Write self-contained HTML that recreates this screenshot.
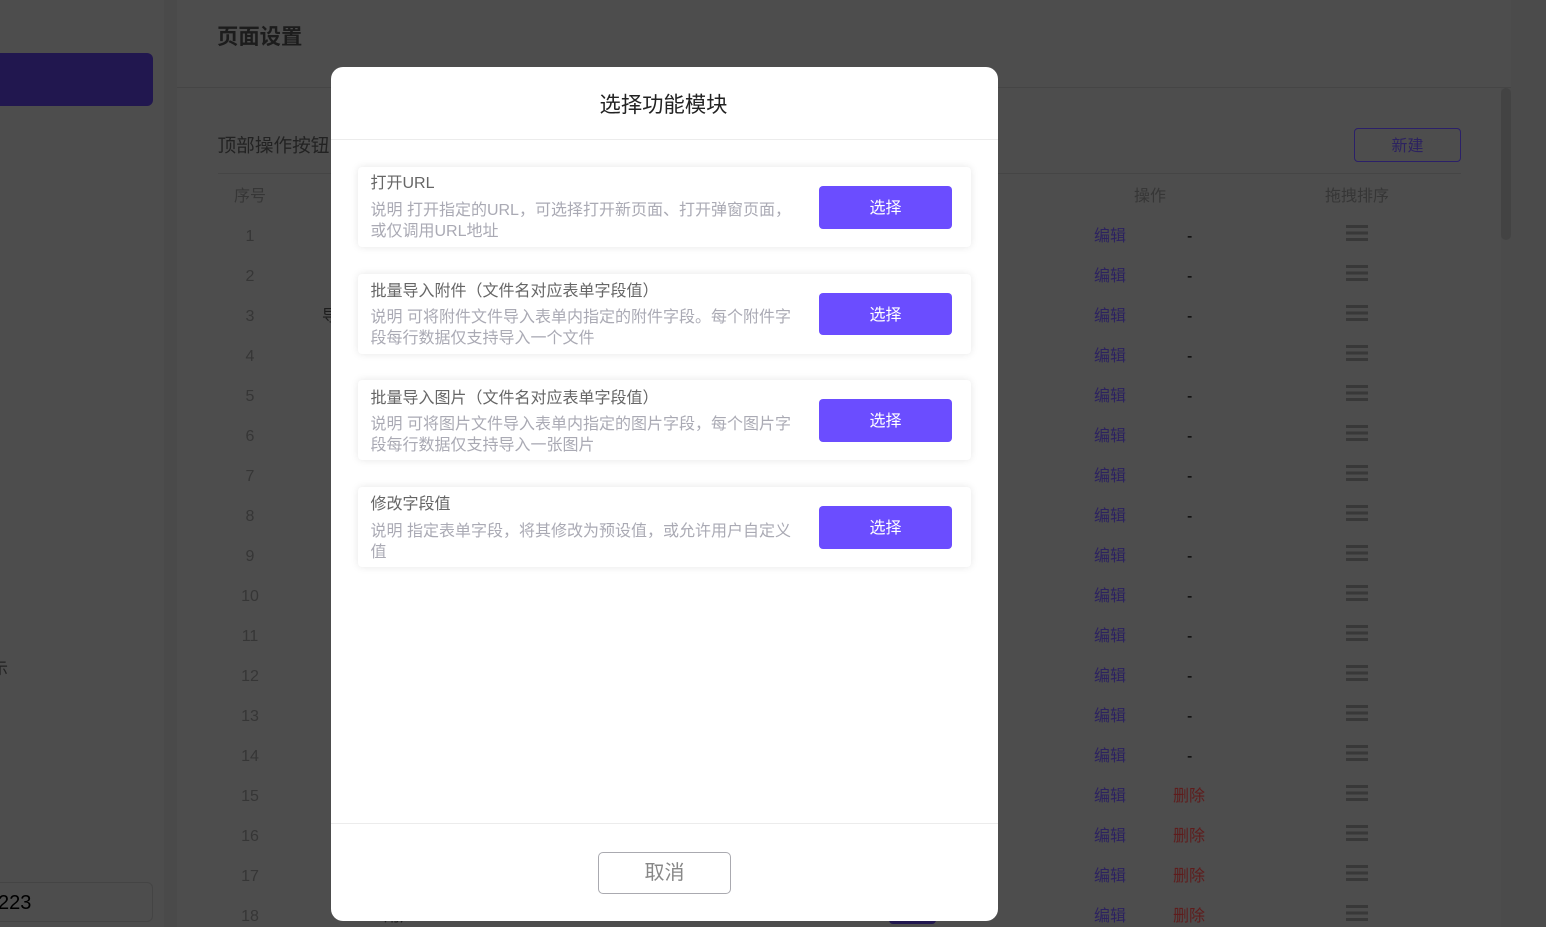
<!DOCTYPE html>
<html lang="zh-CN"><head><meta charset="utf-8"><title>选择功能模块</title>
<style>
*{box-sizing:border-box}
html,body{margin:0;padding:0;width:1546px;height:927px;overflow:hidden;background:#4d4d4d}
body{position:relative;font-family:"Liberation Sans","Noto Sans CJK SC",sans-serif}
.a{position:absolute;white-space:nowrap}
.r{position:absolute;left:0;width:1546px;height:40px}
.r span,.r i{position:absolute;top:2px;height:40px;line-height:40px;font-size:16px;font-style:normal;white-space:nowrap}
.n{left:210px;width:80px;text-align:center;color:#363636}
.e{left:1094px;color:#2c2260}
.d{left:1173px;color:#5f1c1c}
.m{left:1187px;color:#000;width:6px}
.r b{position:absolute;left:1346px;top:10px;width:22px;height:16px;background:linear-gradient(#383838 0 3px,transparent 3px 6.5px,#383838 6.5px 9.5px,transparent 9.5px 13px,#383838 13px 16px)}
#modal{position:absolute;left:331px;top:67px;width:667px;height:854px;background:#fff;border-radius:12px;overflow:hidden}
.card{position:absolute;left:27px;width:613px;height:80px;background:#fff;border-radius:4px;box-shadow:0 0 8px rgba(0,0,0,.1)}
.t{position:absolute;left:12.5px;font-size:16px;line-height:21px;color:#666;white-space:nowrap}
.l{position:absolute;left:12.5px;font-size:16px;line-height:21px;color:#aaaab4;white-space:nowrap}
.btn{position:absolute;left:461px;top:19px;width:133px;height:43px;background:#6b4dff;border-radius:4px;color:#fff;font-size:16px;line-height:45px;text-align:center}
</style></head><body>
<div class="a" style="left:164px;top:0;width:13px;height:927px;background:#4a4a4a"></div>
<div class="a" style="left:0;top:53px;width:153px;height:53px;background:#21174f;border-radius:0 6px 6px 0"></div>
<div class="a" style="left:-8px;top:659px;font-size:16px;line-height:22px;color:#222">示</div>
<div class="a" style="left:-10px;top:882px;width:163px;height:40px;border:1px solid #444;border-radius:6px"></div>
<div class="a" style="left:-2px;top:890px;font-size:20px;line-height:26px;color:#000">223</div>

<div class="a" style="left:177px;top:87px;width:1334px;height:1px;background:#454545"></div>
<div class="a" style="left:217px;top:23px;font-size:21.33px;line-height:28px;font-weight:700;color:#1c1c1c">页面设置</div>
<div class="a" style="left:217.5px;top:132px;font-size:18.67px;line-height:28px;color:#222">顶部操作按钮</div>
<div class="a" style="left:218px;top:173px;width:1243px;height:1px;background:#454545"></div>
<div class="a" style="left:1354px;top:128px;width:107px;height:34px;border:1px solid #2b2069;border-radius:4px;color:#2c2260;font-size:16px;line-height:35px;text-align:center">新建</div>
<div class="a" style="left:234px;top:186px;font-size:16px;line-height:22px;color:#363636">序号</div>
<div class="a" style="left:1134px;top:186px;font-size:16px;line-height:22px;color:#363636">操作</div>
<div class="a" style="left:1325px;top:186px;font-size:16px;line-height:22px;color:#363636">拖拽排序</div>
<div class="a" style="left:1501px;top:88px;width:10px;height:839px;background:#4b4b4b"></div>
<div class="a" style="left:1501px;top:88px;width:10px;height:152px;background:#434343;border-radius:5px"></div>
<div class="a" style="left:1511px;top:0;width:35px;height:927px;background:#4b4b4b"></div>

<div class="r" style="top:215px"><span class="n">1</span><span class="e">编辑</span><span class="m">-</span><b></b></div>
<div class="r" style="top:255px"><span class="n">2</span><span class="e">编辑</span><span class="m">-</span><b></b></div>
<div class="r" style="top:295px"><span class="n">3</span><span style="left:322px;color:#1c1c1c">导入</span><span class="e">编辑</span><span class="m">-</span><b></b></div>
<div class="r" style="top:335px"><span class="n">4</span><span class="e">编辑</span><span class="m">-</span><b></b></div>
<div class="r" style="top:375px"><span class="n">5</span><span class="e">编辑</span><span class="m">-</span><b></b></div>
<div class="r" style="top:415px"><span class="n">6</span><span class="e">编辑</span><span class="m">-</span><b></b></div>
<div class="r" style="top:455px"><span class="n">7</span><span class="e">编辑</span><span class="m">-</span><b></b></div>
<div class="r" style="top:495px"><span class="n">8</span><span class="e">编辑</span><span class="m">-</span><b></b></div>
<div class="r" style="top:535px"><span class="n">9</span><span class="e">编辑</span><span class="m">-</span><b></b></div>
<div class="r" style="top:575px"><span class="n">10</span><span class="e">编辑</span><span class="m">-</span><b></b></div>
<div class="r" style="top:615px"><span class="n">11</span><span class="e">编辑</span><span class="m">-</span><b></b></div>
<div class="r" style="top:655px"><span class="n">12</span><span class="e">编辑</span><span class="m">-</span><b></b></div>
<div class="r" style="top:695px"><span class="n">13</span><span class="e">编辑</span><span class="m">-</span><b></b></div>
<div class="r" style="top:735px"><span class="n">14</span><span class="e">编辑</span><span class="m">-</span><b></b></div>
<div class="r" style="top:775px"><span class="n">15</span><span class="e">编辑</span><span class="d">删除</span><b></b></div>
<div class="r" style="top:815px"><span class="n">16</span><span class="e">编辑</span><span class="d">删除</span><b></b></div>
<div class="r" style="top:855px"><span class="n">17</span><span class="e">编辑</span><span class="d">删除</span><b></b></div>
<div class="r" style="top:895px"><span class="n">18</span><span style="left:384px;color:#1c1c1c">用户</span><span class="e">编辑</span><span class="d">删除</span><b></b></div>
<div class="a" style="left:889px;top:905px;width:47px;height:19px;background:#21174f;border-radius:4px"></div>

<div id="modal">
<div class="a" style="left:-1px;width:667px;top:24px;text-align:center;font-size:21.33px;line-height:28px;color:#222">选择功能模块</div>
<div class="a" style="left:0;top:72px;width:667px;height:1px;background:#ececec"></div>

<div class="card" style="top:100px"><div class="t" style="top:6px">打开URL</div>
<div class="l" style="top:33px">说明 打开指定的URL，可选择打开新页面、打开弹窗页面，</div>
<div class="l" style="top:54px">或仅调用URL地址</div><div class="btn">选择</div></div>

<div class="card" style="top:207px"><div class="t" style="top:7px">批量导入附件（文件名对应表单字段值）</div>
<div class="l" style="top:33px">说明 可将附件文件导入表单内指定的附件字段。每个附件字</div>
<div class="l" style="top:54px">段每行数据仅支持导入一个文件</div><div class="btn" style="height:42px">选择</div></div>

<div class="card" style="top:313px"><div class="t" style="top:8px">批量导入图片（文件名对应表单字段值）</div>
<div class="l" style="top:34px">说明 可将图片文件导入表单内指定的图片字段，每个图片字</div>
<div class="l" style="top:55px">段每行数据仅支持导入一张图片</div><div class="btn">选择</div></div>

<div class="card" style="top:420px"><div class="t" style="top:7px">修改字段值</div>
<div class="l" style="top:34px">说明 指定表单字段，将其修改为预设值，或允许用户自定义</div>
<div class="l" style="top:55px">值</div><div class="btn">选择</div></div>

<div class="a" style="left:0;top:756px;width:667px;height:1px;background:#ececec"></div>
<div class="a" style="left:267px;top:785px;width:133px;height:42px;border:1px solid #aaaab0;border-radius:5px;color:#888;font-size:20px;line-height:40px;text-align:center">取消</div>
</div>
</body></html>
